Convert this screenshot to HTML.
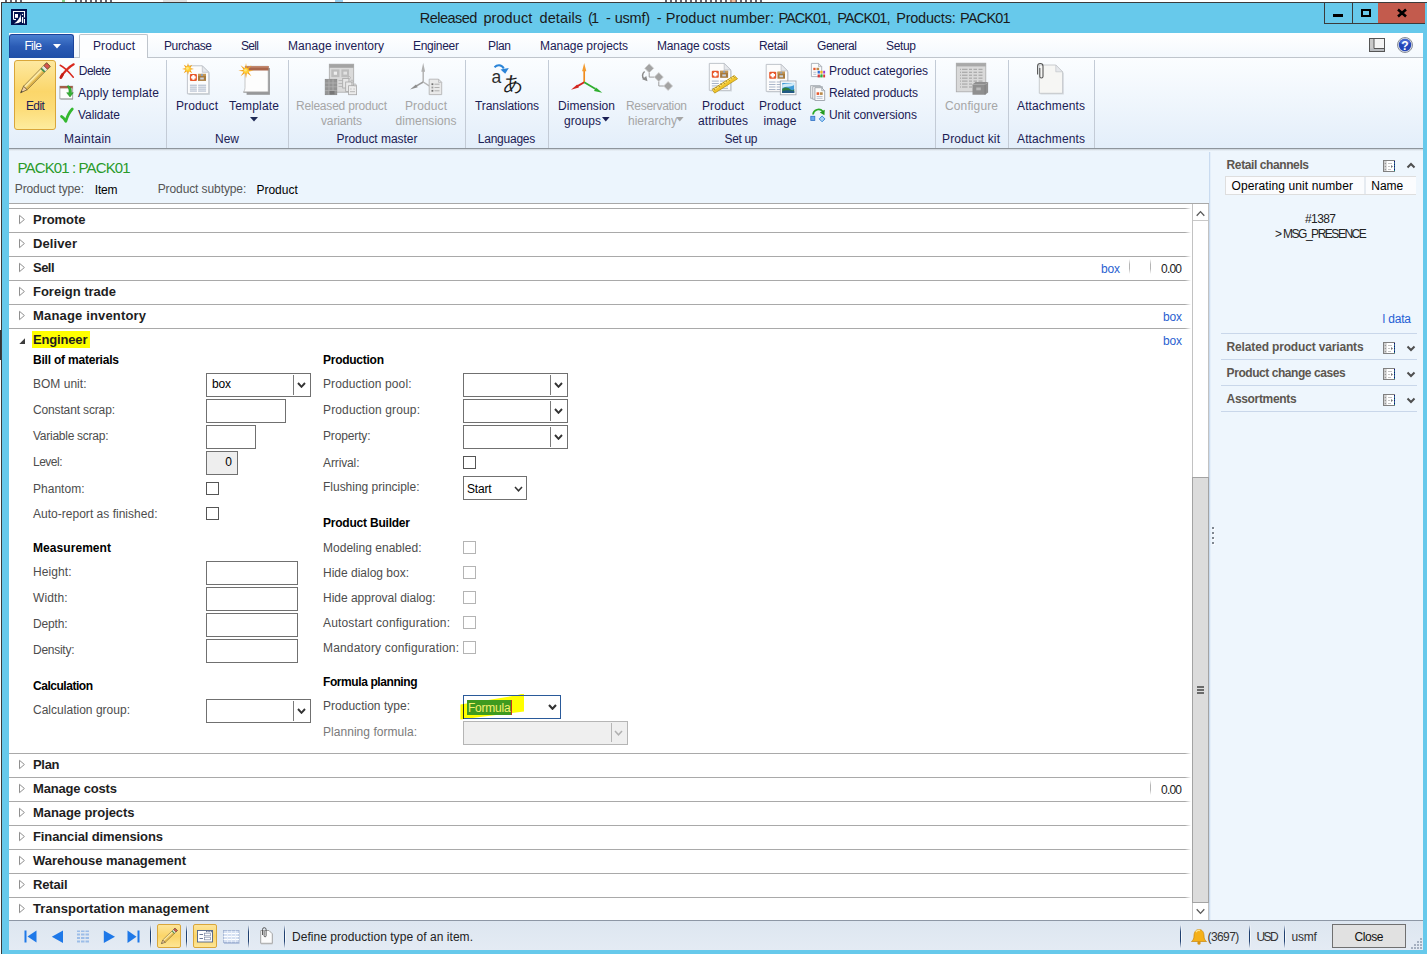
<!DOCTYPE html><html><head><meta charset="utf-8"><title>Released product details</title><style>
html,body{margin:0;padding:0}body{width:1427px;height:954px;position:relative;overflow:hidden;background:#fff;font-family:"Liberation Sans", sans-serif;font-size:12px}
.a{position:absolute;box-sizing:border-box}.t{position:absolute;white-space:pre}
</style></head><body>
<div class="a" style="left:0px;top:0px;width:1427px;height:954px;background:#ffffff;"></div>
<div class="a" style="left:5px;top:0px;width:17px;height:2px;background:repeating-linear-gradient(90deg,#223 0,#223 2px,transparent 2px,transparent 5px);opacity:.7;"></div>
<div class="a" style="left:75px;top:0px;width:37px;height:2px;background:repeating-linear-gradient(90deg,#223 0,#223 2px,transparent 2px,transparent 5px);opacity:.7;"></div>
<div class="a" style="left:665px;top:0px;width:97px;height:2px;background:repeating-linear-gradient(90deg,#223 0,#223 2px,transparent 2px,transparent 5px);opacity:.7;"></div>
<div class="a" style="left:62px;top:0px;width:3px;height:2px;background:#3a3;opacity:.6;"></div>
<div class="a" style="left:163px;top:0px;width:24px;height:2px;background:#ccc;opacity:.6;"></div>
<div class="a" style="left:335px;top:0px;width:8px;height:2px;background:#5ad;opacity:.6;"></div>
<div class="a" style="left:730px;top:0px;width:6px;height:2px;background:#e96;opacity:.6;"></div>
<div class="a" style="left:0px;top:330px;width:1px;height:30px;background:#333;"></div>
<div class="a" style="left:1px;top:2px;width:1426px;height:952px;background:#67c9eb;border-top:1px solid #3b3b3b;border-left:1px solid #3b3b3b;"></div>
<svg class="a" style="left:11px;top:9px" width="16" height="16" viewBox="0 0 16 16"><rect x="0" y="0" width="16" height="16" fill="#00114d"/><path d="M2.500 10.500V2.500H13.500V8.500" stroke="#fff" stroke-width="1.100" fill="none"/><path d="M2.500 10.500H5" stroke="#fff" stroke-width="1.100"/><rect x="4" y="5" width="3" height="3.800" fill="#fff"/><path d="M9.600 5C9 9 6.500 12.500 3.200 14.600C6 14.700 8.500 13.800 10.300 12.600Z" fill="#fff"/><circle cx="11.500" cy="5.500" r=".7" fill="#fff"/><rect x="11" y="8" width="1.200" height="6" fill="#fff"/><rect x="13" y="10" width="1" height="4.500" fill="#fff"/></svg>
<div class="a" style="left:1324px;top:2px;width:101px;height:22px;border:1px solid #3b3b3b;border-top:none;border-right:none;"></div>
<div class="a" style="left:1378px;top:3px;width:47px;height:20px;background:#c35b4d;"></div>
<div class="a" style="left:1352px;top:3px;width:1px;height:20px;background:#3b3b3b;"></div>
<div class="a" style="left:1333px;top:14px;width:10px;height:3px;background:#000;"></div>
<div class="a" style="left:1361px;top:9px;width:10px;height:8px;border:2px solid #000;"></div>
<svg class="a" style="left:1397px;top:8px" width="10" height="10" viewBox="0 0 10 10"><path d="M1 1.5L9 8.5M9 1.5L1 8.5" stroke="#000" stroke-width="2.6" fill="none"/></svg>
<div class="a" style="left:9px;top:33px;width:1414px;height:917px;background:#eef6fd;"></div>
<div class="a" style="left:9px;top:33px;width:1414px;height:25px;background:linear-gradient(#ffffff,#f3f8fd);"></div>
<div class="a" style="left:9px;top:57px;width:1414px;height:1px;background:#bfc5cc;"></div>
<div class="a" style="left:9px;top:34px;width:65px;height:24px;background:linear-gradient(#4a7fd0,#2a5bb5 50%,#1f4fa8);border:1px solid #1c449a;border-radius:3px 3px 0 0;border-bottom:none;"></div>
<svg class="a" style="left:53px;top:44px" width="8" height="5" viewBox="0 0 8 5"><path d="M0 0h8L4 4.5z" fill="#fff"/></svg>
<div class="a" style="left:79px;top:34px;width:69px;height:24px;background:#fdfeff;border:1px solid #bfc5cc;border-bottom:none;border-radius:2px 2px 0 0;"></div>
<svg class="a" style="left:1369px;top:38px" width="16" height="14" viewBox="0 0 16 14"><rect x="0.5" y="0.5" width="15" height="13" fill="#f4f4f4" stroke="#555"/><rect x="1" y="1" width="4" height="12" fill="#c9c9c9"/><rect x="1" y="10.5" width="14" height="2.5" fill="#b9bcc0"/><path d="M5 1v9.5H15" stroke="#555" fill="none"/></svg>
<svg class="a" style="left:1397px;top:37px" width="16" height="16" viewBox="0 0 16 16"><circle cx="8" cy="8" r="7.5" fill="#d8dde6" stroke="#8a8f99"/><circle cx="8" cy="8" r="6.2" fill="#2345b8"/><ellipse cx="8" cy="5" rx="5" ry="3" fill="#5a7de0" opacity=".6"/></svg>
<div class="a" style="left:9px;top:58px;width:1414px;height:90px;background:linear-gradient(#fbfdff,#eef5fc 55%,#e3eefa);"></div>
<div class="a" style="left:9px;top:148px;width:1414px;height:1px;background:#8e959c;"></div>
<div class="a" style="left:9px;top:149px;width:1414px;height:2px;background:linear-gradient(#c9d0d8,#eef6fd);"></div>
<div class="a" style="left:166px;top:60px;width:1px;height:88px;background:#c3cbd6;"></div>
<div class="a" style="left:288px;top:60px;width:1px;height:88px;background:#c3cbd6;"></div>
<div class="a" style="left:465px;top:60px;width:1px;height:88px;background:#c3cbd6;"></div>
<div class="a" style="left:548px;top:60px;width:1px;height:88px;background:#c3cbd6;"></div>
<div class="a" style="left:935px;top:60px;width:1px;height:88px;background:#c3cbd6;"></div>
<div class="a" style="left:1008px;top:60px;width:1px;height:88px;background:#c3cbd6;"></div>
<div class="a" style="left:1094px;top:60px;width:1px;height:88px;background:#c3cbd6;"></div>
<div class="a" style="left:14px;top:60px;width:42px;height:70px;background:linear-gradient(#fde8a0,#fbd66a 45%,#fcdc78 70%,#fdec9e);border:1px solid #d9a63a;border-radius:3px;"></div>
<svg class="a" style="left:250px;top:117px" width="8" height="5" viewBox="0 0 8 5"><path d="M0 0h8L4 4.5z" fill="#1e2a55"/></svg>
<svg class="a" style="left:601.5px;top:117.2px" width="8" height="5" viewBox="0 0 8 5"><path d="M0 0h7.600L3.800 4.400z" fill="#1b2054"/></svg>
<svg class="a" style="left:676.4px;top:117.2px" width="8" height="5" viewBox="0 0 8 5"><path d="M0 0h7.600L3.800 4.400z" fill="#a6a6a6"/></svg>
<svg class="a" style="left:0;top:58px" width="1427" height="92" viewBox="0 58 1427 92"><polygon points="27.11,89.76 50.18,66.36 46.62,62.84 23.55,86.25" fill="#f2cf6a" stroke="#6a5530" stroke-width="0.8" stroke-linejoin="round"/><polygon points="25.06,87.74 42.02,70.54 40.77,69.31 23.81,86.51" fill="#fbe9a6"/><polygon points="25.95,88.62 42.91,71.42 43.89,72.38 26.93,89.59" fill="#d9ad45"/><polygon points="44.06,72.56 45.45,71.15 41.89,67.64 40.50,69.05" fill="#3f8f4f"/><polygon points="45.45,71.15 47.40,69.18 43.84,65.66 41.89,67.64" fill="#e4e4e4"/><polygon points="47.40,69.18 50.18,66.36 46.62,62.84 43.84,65.66" fill="#d9534f" stroke="#6a5530" stroke-width="0.8" stroke-linejoin="round"/><polygon points="20.60,92.80 27.11,89.76 23.55,86.25" fill="#f1cfa4" stroke="#6a5530" stroke-width="0.8" stroke-linejoin="round"/><polygon points="20.60,92.80 22.75,91.80 21.57,90.64" fill="#3a3a3a"/><path d="M60.200 65.200C64 67 69 72 73.300 77.200" stroke="#d9281e" stroke-width="1.500" fill="none" stroke-linecap="round"/><path d="M73.700 64.300C69.500 66.500 63.500 72.500 61 77" stroke="#d9281e" stroke-width="2.200" fill="none" stroke-linecap="round"/><path d="M62.500 74.500L60.800 77.600" stroke="#c21f17" stroke-width="2.800" stroke-linecap="round"/><rect x="60.500" y="87.500" width="12.500" height="12.500" fill="#8d8d8d" opacity=".5"/><rect x="59.900" y="86.200" width="12.800" height="12.600" fill="#fdfdfd" stroke="#9a9a9a" stroke-width=".8"/><rect x="59.900" y="86" width="12.800" height="2.400" fill="#a5604a"/><path d="M68.200 85.500c3 1.500 3.600 4.500 3.200 7.200l1.900 0l-3.300 4.300l-3.300-4.300l2.200 0c.3-2.500-.1-4.700-1.700-6.500z" fill="#35b035" stroke="#1f8a1f" stroke-width=".5"/><path d="M61.500 116.500C63.300 117.500 64.800 119.200 65.800 121.300C67.200 116.500 69.500 112 72.300 109" stroke="#34b830" stroke-width="2.700" fill="none" stroke-linecap="round" stroke-linejoin="round"/><path d="M188.6 67.0h14.899999999999999l6.5 6.5v21.5h-21.4z" fill="#8a8f98" opacity=".28"/><path d="M187.4 65.8h14.899999999999999l6.5 6.5v21.5h-21.4z" fill="#fcfcfc" stroke="#b9bdc4" stroke-width=".9"/><path d="M202.3 65.8v6.5h6.5z" fill="#e6e8ec" stroke="#b9bdc4" stroke-width=".7"/><rect x="189.9" y="73.89999999999999" width="7" height="7" rx="1" fill="#e8582c"/><path d="M192.3 75.1h2.2v1.2000000000000002h1.2000000000000002v2.2h-1.2000000000000002v1.2000000000000002h-2.2v-1.2000000000000002h-1.2000000000000002v-2.2h1.2000000000000002z" fill="#fff"/><rect x="198.0" y="73.89999999999999" width="8" height="7" fill="#a87a3c"/><rect x="198.0" y="73.89999999999999" width="8" height="2" fill="#c79a55"/><rect x="200.2" y="77.49999999999999" width="3.6" height="2" fill="#c9d3e0"/><rect x="201.0" y="73.89999999999999" width="2" height="2" fill="#8fa0b8"/><rect x="189.9" y="84.70" width="7" height="1" fill="#a9b5c9"/><rect x="198.1" y="84.70" width="8" height="1" fill="#a9b5c9"/><rect x="189.9" y="86.65" width="7" height="1" fill="#a9b5c9"/><rect x="198.1" y="86.65" width="8" height="1" fill="#a9b5c9"/><rect x="189.9" y="88.60" width="7" height="1" fill="#a9b5c9"/><rect x="198.1" y="88.60" width="8" height="1" fill="#a9b5c9"/><rect x="189.9" y="90.55" width="7" height="1" fill="#a9b5c9"/><rect x="198.1" y="90.55" width="8" height="1" fill="#a9b5c9"/><polygon points="188.00,62.90 188.96,66.59 192.24,64.66 190.31,67.94 194.00,68.90 190.31,69.86 192.24,73.14 188.96,71.21 188.00,74.90 187.04,71.21 183.76,73.14 185.69,69.86 182.00,68.90 185.69,67.94 183.76,64.66 187.04,66.59" fill="#f5a21a"/><circle cx="188" cy="68.9" r="2.7" fill="#ffcf33"/><circle cx="187.5" cy="68.4" r="1.35" fill="#ffe680"/><rect x="246.600" y="68" width="23.300" height="26.800" fill="#777" opacity=".75"/><path d="M245 66.300h23.200v25.800h-24.500l0.600-1.500c.5-1 .7-2 .7-3z" fill="#fdfdfd" stroke="#a5a5a5" stroke-width=".6"/><rect x="245" y="66.100" width="23.600" height="4.400" fill="#a9664c"/><rect x="245" y="66.100" width="23.600" height="1.500" fill="#c28a70"/><path d="M243.300 92.200h25" stroke="#9a9a9a" stroke-width=".9"/><polygon points="246.00,63.00 246.92,68.48 251.44,65.26 248.22,69.78 253.70,70.70 248.22,71.62 251.44,76.14 246.92,72.92 246.00,78.40 245.08,72.92 240.56,76.14 243.78,71.62 238.30,70.70 243.78,69.78 240.56,65.26 245.08,68.48" fill="#f5a21a"/><circle cx="246" cy="70.7" r="2.6" fill="#ffcf33"/><circle cx="245.5" cy="70.2" r="1.30" fill="#ffe680"/><rect x="329.300" y="64.200" width="24.400" height="28" fill="#dadada" stroke="#a9a9a9" stroke-width=".8"/><rect x="329.300" y="64.200" width="24.400" height="3.600" fill="#a3a3a3"/><rect x="331.300" y="69.400" width="8.200" height="7.700" fill="#bdbdbd"/><rect x="333.800" y="71.600" width="3.200" height="3.200" fill="#ededed"/><rect x="341.400" y="69.400" width="7.600" height="7.700" fill="#bdbdbd"/><rect x="343.400" y="71.600" width="3.600" height="3" fill="#e2e2e2"/><path d="M338.500 80.500h4M338.500 83.500h4M338.500 86.500h4" stroke="#b5b5b5" stroke-width=".9"/><rect x="325.200" y="79.300" width="11.600" height="15.400" fill="#949494" stroke="#858585" stroke-width=".7"/><path d="M325.200 83h11.600M325.200 86.800h11.600M325.200 90.600h11.600M329 79.300v15.400M333 79.300v15.400" stroke="#b3b3b3" stroke-width=".8"/><rect x="329.500" y="91" width="5" height="3.500" fill="#777"/><rect x="342.700" y="78.500" width="6.200" height="9.500" fill="#e6e6e6" stroke="#a6a6a6" stroke-width=".8"/><rect x="345.700" y="82" width="6.200" height="9.500" fill="#e9e9e9" stroke="#a6a6a6" stroke-width=".8"/><rect x="348.600" y="85.700" width="8" height="9" fill="#ececec" stroke="#a6a6a6" stroke-width=".8"/><circle cx="349.300" cy="77.700" r="1.100" fill="#e9e9e9" stroke="#a0a0a0" stroke-width=".6"/><circle cx="352" cy="81.200" r="1.100" fill="#e9e9e9" stroke="#a0a0a0" stroke-width=".6"/><circle cx="355" cy="84.900" r="1.100" fill="#e9e9e9" stroke="#a0a0a0" stroke-width=".6"/><path d="M350.300 89h1.200M353.500 89h1.200M350 91.700h5" stroke="#b0b0b0" stroke-width=".9"/><path d="M423.200 70v12" stroke="#b4b4b4" stroke-width="1.500"/><path d="M423.200 62.800l1.900 8.900h-3.800z" fill="#b0b0b0"/><path d="M423.200 82l-8 4.700" stroke="#9b9b9b" stroke-width="1.500"/><path d="M410 89.600l6-5.200l1.700 2.900z" fill="#8e8e8e"/><path d="M423.200 82l6 3.800" stroke="#b5b5b5" stroke-width="1.400"/><path d="M429.2 79.2h9.3l3.2 3.2v12.2h-12.5z" fill="#e9e9e9" stroke="#b5b5b5" stroke-width=".9"/><path d="M438.5 79.2v3.2h3.2z" fill="#e6e8ec" stroke="#b5b5b5" stroke-width=".7"/><rect x="431.500" y="83.300" width="1.800" height="1.800" fill="#6f6f6f"/><rect x="431.500" y="86.600" width="1.800" height="1.800" fill="#9a9a9a"/><rect x="431.500" y="89.900" width="1.800" height="1.800" fill="#6f6f6f"/><path d="M434.500 84.200h5M434.500 87.500h5M434.500 90.800h5" stroke="#a8a8a8" stroke-width=".9"/><path d="M494.500 67.200c2.600-2.600 6.800-2.900 9.300 1.200" stroke="#2a84d8" stroke-width="2" fill="none"/><path d="M500.500 69.600l8.300-1.600l-3.600 5.700z" fill="#2a84d8"/><path d="M584.200 70v12.300" stroke="#f08a1c" stroke-width="1.700"/><path d="M584.200 63l2.100 8.300h-4.200z" fill="#f39a2e"/><path d="M584.200 82.300l-7.500 4.300" stroke="#d3261f" stroke-width="1.800"/><path d="M571 89.700l6.200-5.300l1.700 3.100z" fill="#d3261f"/><path d="M584.200 82.300l11 6.400" stroke="#2fae2f" stroke-width="1.800"/><path d="M602.300 92.700l-8.300-1.800l1.900-3.400z" fill="#2fae2f"/><path d="M649.200 72.500v4.600h5M658.800 81.500v4.500h5" stroke="#9d9d9d" fill="none" stroke-width="1"/><path d="M649.2 63.8l4.5 4.5l-4.5 4.5l-4.5 -4.5z" fill="#a3a3a3" stroke="#d0d0d0" stroke-width=".8"/><path d="M658.8 72.6l4.5 4.5l-4.5 4.5l-4.5 -4.5z" fill="#a3a3a3" stroke="#d0d0d0" stroke-width=".8"/><path d="M668.1 81.5l4.5 4.5l-4.5 4.5l-4.5 -4.5z" fill="#a3a3a3" stroke="#d0d0d0" stroke-width=".8"/><path d="M644.600 71.500c-2.600 2-2.700 5.300-.6 7.500" stroke="#8b8b8b" stroke-width="1.500" fill="none"/><path d="M642.200 79.300l5.300 2l-1.200-5.200z" fill="#8b8b8b"/><path d="M710.5 64.6h14.899999999999999l6.5 6.5v20.5h-21.4z" fill="#8a8f98" opacity=".28"/><path d="M709.3 63.4h14.899999999999999l6.5 6.5v20.5h-21.4z" fill="#fcfcfc" stroke="#b9bdc4" stroke-width=".9"/><path d="M724.1999999999999 63.4v6.5h6.5z" fill="#e6e8ec" stroke="#b9bdc4" stroke-width=".7"/><rect x="711.8" y="70.8" width="7" height="7" rx="1" fill="#e8582c"/><path d="M714.1999999999999 72.0h2.2v1.2000000000000002h1.2000000000000002v2.2h-1.2000000000000002v1.2000000000000002h-2.2v-1.2000000000000002h-1.2000000000000002v-2.2h1.2000000000000002z" fill="#fff"/><rect x="720.1" y="70.8" width="8" height="7" fill="#a87a3c"/><rect x="720.1" y="70.8" width="8" height="2" fill="#c79a55"/><rect x="722.3000000000001" y="74.39999999999999" width="3.6" height="2" fill="#c9d3e0"/><rect x="723.1" y="70.8" width="2" height="2" fill="#8fa0b8"/><rect x="711.8" y="80.60" width="7" height="1" fill="#a9b5c9"/><rect x="720.0" y="80.60" width="8" height="1" fill="#a9b5c9"/><rect x="711.8" y="83.00" width="7" height="1" fill="#a9b5c9"/><rect x="720.0" y="83.00" width="8" height="1" fill="#a9b5c9"/><rect x="711.8" y="85.40" width="7" height="1" fill="#a9b5c9"/><rect x="720.0" y="85.40" width="8" height="1" fill="#a9b5c9"/><rect x="711.8" y="87.80" width="7" height="1" fill="#a9b5c9"/><rect x="720.0" y="87.80" width="8" height="1" fill="#a9b5c9"/><polygon points="712.300,89.600 734.300,75.500 737.500,78.800 714.700,93.100" fill="#f1c52c" stroke="#b8900f" stroke-width=".8"/><polygon points="712.600,89.900 734.300,76 735,76.800 713.200,90.700" fill="#fbe37c"/><path d="M713.62 88.75l1.29 1.39" stroke="#7d5e07" stroke-width=".7"/><path d="M716.06 87.19l0.82 0.88" stroke="#7d5e07" stroke-width=".7"/><path d="M718.51 85.62l1.29 1.39" stroke="#7d5e07" stroke-width=".7"/><path d="M720.95 84.05l0.82 0.88" stroke="#7d5e07" stroke-width=".7"/><path d="M723.40 82.49l1.29 1.39" stroke="#7d5e07" stroke-width=".7"/><path d="M725.84 80.92l0.82 0.88" stroke="#7d5e07" stroke-width=".7"/><path d="M728.29 79.35l1.29 1.39" stroke="#7d5e07" stroke-width=".7"/><path d="M730.73 77.79l0.82 0.88" stroke="#7d5e07" stroke-width=".7"/><path d="M733.18 76.22l1.29 1.39" stroke="#7d5e07" stroke-width=".7"/><path d="M767.4000000000001 65.60000000000001h14.899999999999999l6.5 6.5v20.5h-21.4z" fill="#8a8f98" opacity=".28"/><path d="M766.2 64.4h14.899999999999999l6.5 6.5v20.5h-21.4z" fill="#fcfcfc" stroke="#b9bdc4" stroke-width=".9"/><path d="M781.1 64.4v6.5h6.5z" fill="#e6e8ec" stroke="#b9bdc4" stroke-width=".7"/><rect x="769.2" y="71.7" width="7" height="7" rx="1" fill="#e8582c"/><path d="M771.6 72.9h2.2v1.2000000000000002h1.2000000000000002v2.2h-1.2000000000000002v1.2000000000000002h-2.2v-1.2000000000000002h-1.2000000000000002v-2.2h1.2000000000000002z" fill="#fff"/><rect x="777.5" y="71.7" width="7.5" height="7" fill="#a87a3c"/><rect x="777.5" y="71.7" width="7.5" height="2" fill="#c79a55"/><rect x="779.45" y="75.3" width="3.6" height="2" fill="#c9d3e0"/><rect x="780.25" y="71.7" width="2" height="2" fill="#8fa0b8"/><rect x="769" y="81.50" width="6.5" height="1" fill="#a9b5c9"/><rect x="776.7" y="81.50" width="5" height="1" fill="#a9b5c9"/><rect x="769" y="84.00" width="6.5" height="1" fill="#a9b5c9"/><rect x="776.7" y="84.00" width="5" height="1" fill="#a9b5c9"/><rect x="769" y="86.50" width="6.5" height="1" fill="#a9b5c9"/><rect x="776.7" y="86.50" width="5" height="1" fill="#a9b5c9"/><rect x="769" y="89.00" width="6.5" height="1" fill="#a9b5c9"/><rect x="776.7" y="89.00" width="5" height="1" fill="#a9b5c9"/><rect x="780.300" y="81" width="15.700" height="13.800" fill="#fdfdfd" stroke="#9aa1ab" stroke-width=".8"/><rect x="782.200" y="82.900" width="12" height="10" fill="#3f9ad6"/><path d="M782.200 84.500c4-1.500 8-.5 12-2v2.500c-4 2.500-8 1-12 3z" fill="#cfeaf8"/><path d="M782.200 92.900v-4c3-2.500 6-1.500 8 .3s3 1.200 4-.2v3.900z" fill="#2f7d3a"/><path d="M782.200 92.900v-2c3-1 8-1 12 0v2z" fill="#215a86"/><path d="M811.4 63.4h7.1000000000000005l3.2 3.2v10.0h-10.3z" fill="#fcfcfc" stroke="#a9aeb6" stroke-width=".9"/><path d="M818.4999999999999 63.4v3.2h3.2z" fill="#e6e8ec" stroke="#a9aeb6" stroke-width=".7"/><rect x="813.300" y="67.800" width="2.300" height="2.300" fill="#e8582c"/><rect x="816.500" y="67.800" width="2.600" height="2.300" fill="#b98a4a"/><path d="M813.300 72.300h3M813.300 74.300h3" stroke="#aab4c6" stroke-width=".8"/><rect x="817.600" y="70.800" width="2.300" height="2.700" fill="#2f6fd6"/><rect x="820.300" y="70.800" width="2.300" height="2.700" fill="#f5b21a"/><rect x="823.200" y="70.800" width="1.900" height="2.700" fill="#a03ad0"/><rect x="817.600" y="74.500" width="2.300" height="2.900" fill="#d63a3a"/><rect x="820.300" y="74.500" width="2.300" height="2.900" fill="#35b035"/><rect x="823.200" y="74.500" width="1.900" height="2.900" fill="#d63a3a"/><rect x="810.700" y="85.700" width="9.500" height="12.500" fill="#f1f1f1" stroke="#9aa0a8" stroke-width=".8"/><rect x="812.800" y="86.700" width="9.500" height="12.500" fill="#f5f5f5" stroke="#9aa0a8" stroke-width=".8"/><path d="M814.9 87.7h6.800000000000001l3 3v9.8h-9.8z" fill="#fcfcfc" stroke="#9aa0a8" stroke-width=".9"/><path d="M821.6999999999999 87.7v3h3z" fill="#e6e8ec" stroke="#9aa0a8" stroke-width=".7"/><rect x="816.600" y="92.300" width="2.600" height="2.600" fill="#e8582c"/><rect x="820" y="92.300" width="2.700" height="2.600" fill="#b98a4a"/><path d="M816.600 96.500h6M816.600 98.300h6" stroke="#aab4c6" stroke-width=".8"/><path d="M813 114.500c.5-4.800 6.500-6.800 10-3" stroke="#2caa27" stroke-width="1.700" fill="none"/><path d="M824.800 109.700l-.4 5.500l-4.600-2.800z" fill="#239a1f"/><rect x="810.800" y="116.300" width="4" height="4.200" fill="#6aa8ee" stroke="#2f6fc4" stroke-width=".8"/><path d="M822.100 116l2.900 2.900l-2.900 2.900l-2.900-2.900z" fill="#a5d2f7" stroke="#2f7fd0" stroke-width=".9"/><rect x="956.300" y="63.200" width="29.500" height="28.600" fill="#d9d9d9" stroke="#a9a9a9" stroke-width=".8"/><rect x="956.300" y="63.200" width="29.500" height="3.200" fill="#a9a9a9"/><path d="M960 69.30h1M962 69.30h5.500M969 69.30h3M973.500 69.30h3.500M978.500 69.30h4" stroke="#9f9f9f" stroke-width="1"/><path d="M960 72.25h1M962 72.25h5.500M969 72.25h3M973.500 72.25h3.500M978.500 72.25h4" stroke="#9f9f9f" stroke-width="1"/><path d="M960 75.20h1M962 75.20h5.500M969 75.20h3M973.500 75.20h3.500M978.500 75.20h4" stroke="#9f9f9f" stroke-width="1"/><path d="M960 78.15h1M962 78.15h5.500M969 78.15h3M973.500 78.15h3.500M978.500 78.15h4" stroke="#9f9f9f" stroke-width="1"/><path d="M960 81.10h1M962 81.10h5.500M969 81.10h3M973.500 81.10h3.500M978.500 81.10h4" stroke="#9f9f9f" stroke-width="1"/><path d="M960 84.05h1M962 84.05h5.500M969 84.05h3M973.500 84.05h3.500M978.500 84.05h4" stroke="#9f9f9f" stroke-width="1"/><path d="M960 87.00h1M962 87.00h5.500M969 87.00h3M973.500 87.00h3.500M978.500 87.00h4" stroke="#9f9f9f" stroke-width="1"/><path d="M972.500 84.500l3-2.400h12.600v10.300l-3 2.400h-12.600z" fill="#8f8f8f"/><path d="M972.500 84.500h12.600l3-2.400" stroke="#b5b5b5" fill="none" stroke-width=".7"/><path d="M985.100 84.500v10.300" stroke="#7c7c7c" stroke-width=".7"/><rect x="976.300" y="87.500" width="4.500" height="2.800" fill="#b9b9b9"/><path d="M1040.5 66.2h16.5l6.8 6.8v21.5h-23.3z" fill="#8a8f98" opacity=".28"/><path d="M1039.3 65h16.5l6.8 6.8v21.5h-23.3z" fill="#f6f6f4" stroke="#c3c6ca" stroke-width=".9"/><path d="M1055.8 65v6.8h6.8z" fill="#e6e8ec" stroke="#c3c6ca" stroke-width=".7"/><path d="M1037.600 74.500v-8.300a2.700 2.700 0 0 1 5.400 0v10.200a1.600 1.600 0 0 1 -3.200 0v-8.400" stroke="#555" stroke-width="1.100" fill="none"/></svg>
<div class="a" style="left:9px;top:151px;width:1200px;height:52px;background:#ecf5fd;"></div>
<div class="a" style="left:9px;top:203px;width:1200px;height:1px;background:#a8a8a8;"></div>
<div class="a" style="left:9px;top:204px;width:1183px;height:718px;background:#ffffff;"></div>
<div class="a" style="left:9px;top:920px;width:1414px;height:1px;background:#8d97a5;"></div>
<div class="a" style="left:9px;top:921px;width:1414px;height:1px;background:#c3cbd6;"></div>
<div class="a" style="left:9px;top:208px;width:1176px;height:1px;background:#a9a9a9;"></div>
<div class="a" style="left:1185px;top:208px;width:6px;height:1px;background:linear-gradient(90deg,#a9a9a9,#ffffff);"></div>
<div class="a" style="left:9px;top:232px;width:1176px;height:1px;background:#a9a9a9;"></div>
<div class="a" style="left:1185px;top:232px;width:6px;height:1px;background:linear-gradient(90deg,#a9a9a9,#ffffff);"></div>
<div class="a" style="left:9px;top:256px;width:1176px;height:1px;background:#a9a9a9;"></div>
<div class="a" style="left:1185px;top:256px;width:6px;height:1px;background:linear-gradient(90deg,#a9a9a9,#ffffff);"></div>
<div class="a" style="left:9px;top:280px;width:1176px;height:1px;background:#a9a9a9;"></div>
<div class="a" style="left:1185px;top:280px;width:6px;height:1px;background:linear-gradient(90deg,#a9a9a9,#ffffff);"></div>
<div class="a" style="left:9px;top:304px;width:1176px;height:1px;background:#a9a9a9;"></div>
<div class="a" style="left:1185px;top:304px;width:6px;height:1px;background:linear-gradient(90deg,#a9a9a9,#ffffff);"></div>
<div class="a" style="left:9px;top:328px;width:1176px;height:1px;background:#a9a9a9;"></div>
<div class="a" style="left:1185px;top:328px;width:6px;height:1px;background:linear-gradient(90deg,#a9a9a9,#ffffff);"></div>
<div class="a" style="left:9px;top:753px;width:1176px;height:1px;background:#a9a9a9;"></div>
<div class="a" style="left:1185px;top:753px;width:6px;height:1px;background:linear-gradient(90deg,#a9a9a9,#ffffff);"></div>
<div class="a" style="left:9px;top:777px;width:1176px;height:1px;background:#a9a9a9;"></div>
<div class="a" style="left:1185px;top:777px;width:6px;height:1px;background:linear-gradient(90deg,#a9a9a9,#ffffff);"></div>
<div class="a" style="left:9px;top:801px;width:1176px;height:1px;background:#a9a9a9;"></div>
<div class="a" style="left:1185px;top:801px;width:6px;height:1px;background:linear-gradient(90deg,#a9a9a9,#ffffff);"></div>
<div class="a" style="left:9px;top:825px;width:1176px;height:1px;background:#a9a9a9;"></div>
<div class="a" style="left:1185px;top:825px;width:6px;height:1px;background:linear-gradient(90deg,#a9a9a9,#ffffff);"></div>
<div class="a" style="left:9px;top:849px;width:1176px;height:1px;background:#a9a9a9;"></div>
<div class="a" style="left:1185px;top:849px;width:6px;height:1px;background:linear-gradient(90deg,#a9a9a9,#ffffff);"></div>
<div class="a" style="left:9px;top:873px;width:1176px;height:1px;background:#a9a9a9;"></div>
<div class="a" style="left:1185px;top:873px;width:6px;height:1px;background:linear-gradient(90deg,#a9a9a9,#ffffff);"></div>
<div class="a" style="left:9px;top:897px;width:1176px;height:1px;background:#a9a9a9;"></div>
<div class="a" style="left:1185px;top:897px;width:6px;height:1px;background:linear-gradient(90deg,#a9a9a9,#ffffff);"></div>
<svg class="a" style="left:18.5px;top:214px" width="7" height="11" viewBox="0 0 7 11"><path d="M0.500 1.300L5.400 5.500L0.500 9.700z" fill="#fff" stroke="#8f8f8f" stroke-width="1"/></svg>
<svg class="a" style="left:18.5px;top:238px" width="7" height="11" viewBox="0 0 7 11"><path d="M0.500 1.300L5.400 5.500L0.500 9.700z" fill="#fff" stroke="#8f8f8f" stroke-width="1"/></svg>
<svg class="a" style="left:18.5px;top:262px" width="7" height="11" viewBox="0 0 7 11"><path d="M0.500 1.300L5.400 5.500L0.500 9.700z" fill="#fff" stroke="#8f8f8f" stroke-width="1"/></svg>
<svg class="a" style="left:18.5px;top:286px" width="7" height="11" viewBox="0 0 7 11"><path d="M0.500 1.300L5.400 5.500L0.500 9.700z" fill="#fff" stroke="#8f8f8f" stroke-width="1"/></svg>
<svg class="a" style="left:18.5px;top:310px" width="7" height="11" viewBox="0 0 7 11"><path d="M0.500 1.300L5.400 5.500L0.500 9.700z" fill="#fff" stroke="#8f8f8f" stroke-width="1"/></svg>
<svg class="a" style="left:18.5px;top:759px" width="7" height="11" viewBox="0 0 7 11"><path d="M0.500 1.300L5.400 5.500L0.500 9.700z" fill="#fff" stroke="#8f8f8f" stroke-width="1"/></svg>
<svg class="a" style="left:18.5px;top:783px" width="7" height="11" viewBox="0 0 7 11"><path d="M0.500 1.300L5.400 5.500L0.500 9.700z" fill="#fff" stroke="#8f8f8f" stroke-width="1"/></svg>
<svg class="a" style="left:18.5px;top:807px" width="7" height="11" viewBox="0 0 7 11"><path d="M0.500 1.300L5.400 5.500L0.500 9.700z" fill="#fff" stroke="#8f8f8f" stroke-width="1"/></svg>
<svg class="a" style="left:18.5px;top:831px" width="7" height="11" viewBox="0 0 7 11"><path d="M0.500 1.300L5.400 5.500L0.500 9.700z" fill="#fff" stroke="#8f8f8f" stroke-width="1"/></svg>
<svg class="a" style="left:18.5px;top:855px" width="7" height="11" viewBox="0 0 7 11"><path d="M0.500 1.300L5.400 5.500L0.500 9.700z" fill="#fff" stroke="#8f8f8f" stroke-width="1"/></svg>
<svg class="a" style="left:18.5px;top:879px" width="7" height="11" viewBox="0 0 7 11"><path d="M0.500 1.300L5.400 5.500L0.500 9.700z" fill="#fff" stroke="#8f8f8f" stroke-width="1"/></svg>
<svg class="a" style="left:18.5px;top:903px" width="7" height="11" viewBox="0 0 7 11"><path d="M0.500 1.300L5.400 5.500L0.500 9.700z" fill="#fff" stroke="#8f8f8f" stroke-width="1"/></svg>
<svg class="a" style="left:18.5px;top:337.5px" width="8" height="8" viewBox="0 0 8 8"><path d="M6 0.300V6H0.300z" fill="#3c3c3c"/></svg>
<div class="a" style="left:32px;top:331px;width:58px;height:17px;background:#ffff00;"></div>
<div class="a" style="left:1129px;top:259px;width:1px;height:15px;background:linear-gradient(#fff,#b4b4b4 35%,#b4b4b4 65%,#fff);"></div>
<div class="a" style="left:1150px;top:259px;width:1px;height:15px;background:linear-gradient(#fff,#b4b4b4 35%,#b4b4b4 65%,#fff);"></div>
<div class="a" style="left:1150px;top:780px;width:1px;height:15px;background:linear-gradient(#fff,#b4b4b4 35%,#b4b4b4 65%,#fff);"></div>
<div class="a" style="left:206px;top:373px;width:105px;height:24px;background:#fff;border:1px solid #707070;"></div>
<div class="a" style="left:293px;top:375px;width:1px;height:20px;background:#7a7a7a;"></div>
<svg class="a" style="left:297px;top:382px" width="9" height="6" viewBox="0 0 9 6"><path d="M1 1L4.500 4.800L8 1" stroke="#333" stroke-width="1.9" fill="none"/></svg>
<div class="a" style="left:206px;top:399px;width:80px;height:24px;background:#fff;border:1px solid #707070;"></div>
<div class="a" style="left:206px;top:425px;width:50px;height:24px;background:#fff;border:1px solid #707070;"></div>
<div class="a" style="left:206px;top:451px;width:32px;height:24px;background:#eeeeee;border:1px solid #707070;"></div>
<div class="a" style="left:206px;top:482px;width:13px;height:13px;background:#fff;border:1px solid #555;"></div>
<div class="a" style="left:206px;top:507px;width:13px;height:13px;background:#fff;border:1px solid #555;"></div>
<div class="a" style="left:206px;top:561px;width:92px;height:24px;background:#fff;border:1px solid #707070;"></div>
<div class="a" style="left:206px;top:587px;width:92px;height:24px;background:#fff;border:1px solid #707070;"></div>
<div class="a" style="left:206px;top:613px;width:92px;height:24px;background:#fff;border:1px solid #707070;"></div>
<div class="a" style="left:206px;top:639px;width:92px;height:24px;background:#fff;border:1px solid #707070;"></div>
<div class="a" style="left:206px;top:699px;width:105px;height:24px;background:#fff;border:1px solid #707070;"></div>
<div class="a" style="left:293px;top:701px;width:1px;height:20px;background:#7a7a7a;"></div>
<svg class="a" style="left:297px;top:708px" width="9" height="6" viewBox="0 0 9 6"><path d="M1 1L4.500 4.800L8 1" stroke="#333" stroke-width="1.9" fill="none"/></svg>
<div class="a" style="left:463px;top:373px;width:105px;height:24px;background:#fff;border:1px solid #707070;"></div>
<div class="a" style="left:550px;top:375px;width:1px;height:20px;background:#7a7a7a;"></div>
<svg class="a" style="left:554px;top:382px" width="9" height="6" viewBox="0 0 9 6"><path d="M1 1L4.500 4.800L8 1" stroke="#333" stroke-width="1.9" fill="none"/></svg>
<div class="a" style="left:463px;top:399px;width:105px;height:24px;background:#fff;border:1px solid #707070;"></div>
<div class="a" style="left:550px;top:401px;width:1px;height:20px;background:#7a7a7a;"></div>
<svg class="a" style="left:554px;top:408px" width="9" height="6" viewBox="0 0 9 6"><path d="M1 1L4.500 4.800L8 1" stroke="#333" stroke-width="1.9" fill="none"/></svg>
<div class="a" style="left:463px;top:425px;width:105px;height:24px;background:#fff;border:1px solid #707070;"></div>
<div class="a" style="left:550px;top:427px;width:1px;height:20px;background:#7a7a7a;"></div>
<svg class="a" style="left:554px;top:434px" width="9" height="6" viewBox="0 0 9 6"><path d="M1 1L4.500 4.800L8 1" stroke="#333" stroke-width="1.9" fill="none"/></svg>
<div class="a" style="left:463px;top:456px;width:13px;height:13px;background:#fff;border:1px solid #555;"></div>
<div class="a" style="left:463px;top:476px;width:64px;height:24px;background:#fff;border:1px solid #707070;"></div>
<svg class="a" style="left:514px;top:486px" width="9" height="6" viewBox="0 0 9 6"><path d="M1 1L4.500 4.800L8 1" stroke="#333" stroke-width="1.5" fill="none"/></svg>
<div class="a" style="left:463px;top:541px;width:13px;height:13px;background:#fff;border:1px solid #b4b4b4;"></div>
<div class="a" style="left:463px;top:566px;width:13px;height:13px;background:#fff;border:1px solid #b4b4b4;"></div>
<div class="a" style="left:463px;top:591px;width:13px;height:13px;background:#fff;border:1px solid #b4b4b4;"></div>
<div class="a" style="left:463px;top:616px;width:13px;height:13px;background:#fff;border:1px solid #b4b4b4;"></div>
<div class="a" style="left:463px;top:641px;width:13px;height:13px;background:#fff;border:1px solid #b4b4b4;"></div>
<div class="a" style="left:463px;top:695px;width:98px;height:24px;background:#ffffff;"></div>
<svg class="a" style="left:455px;top:690px" width="75" height="34" viewBox="455 690 75 34"><polygon points="460.400,704.500 516.600,695.300 521,694 524,694 524,711.500 460.400,719.500" fill="#ffff00"/></svg>
<div class="a" style="left:463px;top:695px;width:98px;height:24px;border:1px solid #2a5a9a;"></div>
<div class="a" style="left:463px;top:704px;width:1px;height:15px;background:#20301a;"></div>
<div class="a" style="left:464px;top:718px;width:60px;height:1px;background:#4a5a1a;opacity:.0;"></div>
<div class="a" style="left:467px;top:700px;width:44px;height:15px;background:#3f9a1f;"></div>
<div class="a" style="left:511px;top:700px;width:1px;height:15px;background:#c8341e;"></div>
<svg class="a" style="left:548px;top:704px" width="9" height="6" viewBox="0 0 9 6"><path d="M1 1L4.500 4.800L8 1" stroke="#333" stroke-width="2.1" fill="none"/></svg>
<div class="a" style="left:463px;top:721px;width:165px;height:24px;background:#efefef;border:1px solid #b5b5b5;"></div>
<div class="a" style="left:611px;top:723px;width:1px;height:19px;background:#b5b5b5;"></div>
<svg class="a" style="left:614px;top:730px" width="9" height="6" viewBox="0 0 9 6"><path d="M1 1L4.500 4.800L8 1" stroke="#b0b0b0" stroke-width="1.5" fill="none"/></svg>
<div class="a" style="left:1192px;top:204px;width:17px;height:716px;background:#ffffff;border-left:1px solid #c2c2c2;border-right:1px solid #c2c2c2;"></div>
<div class="a" style="left:1193px;top:220px;width:15px;height:1px;background:#c8c8c8;"></div>
<div class="a" style="left:1192px;top:477px;width:17px;height:426px;background:#dcdcdc;border:1px solid #a3a3a3;"></div>
<svg class="a" style="left:1196px;top:210px" width="9" height="7" viewBox="0 0 9 7"><path d="M0.700 5.800L4.500 1.600L8.300 5.800" stroke="#5a5a5a" stroke-width="1.300" fill="none"/></svg>
<svg class="a" style="left:1196px;top:908px" width="9" height="7" viewBox="0 0 9 7"><path d="M0.700 1.200L4.500 5.400L8.300 1.200" stroke="#5a5a5a" stroke-width="1.300" fill="none"/></svg>
<div class="a" style="left:1197px;top:686px;width:7px;height:2px;background:#6a6a6a;"></div>
<div class="a" style="left:1197px;top:689px;width:7px;height:2px;background:#6a6a6a;"></div>
<div class="a" style="left:1197px;top:692px;width:7px;height:2px;background:#6a6a6a;"></div>
<div class="a" style="left:1212px;top:527px;width:2px;height:2px;background:#7f8790;"></div>
<div class="a" style="left:1213px;top:528px;width:2px;height:2px;background:#ffffff;opacity:.8;z-index:0;"></div>
<div class="a" style="left:1212px;top:527px;width:2px;height:2px;background:#7f8790;"></div>
<div class="a" style="left:1212px;top:532px;width:2px;height:2px;background:#7f8790;"></div>
<div class="a" style="left:1213px;top:533px;width:2px;height:2px;background:#ffffff;opacity:.8;z-index:0;"></div>
<div class="a" style="left:1212px;top:532px;width:2px;height:2px;background:#7f8790;"></div>
<div class="a" style="left:1212px;top:537px;width:2px;height:2px;background:#7f8790;"></div>
<div class="a" style="left:1213px;top:538px;width:2px;height:2px;background:#ffffff;opacity:.8;z-index:0;"></div>
<div class="a" style="left:1212px;top:537px;width:2px;height:2px;background:#7f8790;"></div>
<div class="a" style="left:1212px;top:542px;width:2px;height:2px;background:#7f8790;"></div>
<div class="a" style="left:1213px;top:543px;width:2px;height:2px;background:#ffffff;opacity:.8;z-index:0;"></div>
<div class="a" style="left:1212px;top:542px;width:2px;height:2px;background:#7f8790;"></div>
<div class="a" style="left:1209px;top:152px;width:1px;height:768px;background:#c9dbf0;"></div>
<div class="a" style="left:1210px;top:152px;width:1px;height:768px;background:#e4effa;"></div>
<svg class="a" style="left:1383px;top:160px" width="12" height="12" viewBox="0 0 12 12"><rect x="0.500" y="0.500" width="11" height="11" fill="#fff" stroke="#808080"/><rect x="1" y="1" width="2.700" height="10" fill="#cfcfcf"/><path d="M1.800 3.500h1M1.800 6.500h1M1.800 9.500h1" stroke="#8a8a8a" stroke-width="1"/><path d="M5 3.500h4M5 6.500h2M5 9.500h3" stroke="#c4c4c4" stroke-width="1"/><path d="M8 5l2 1.500l-2 1.500z" fill="#777"/><path d="M11.500 1v10" stroke="#101080" stroke-width="1" stroke-dasharray="1.500 1"/><path d="M11.500 2.500v10" stroke="#108080" stroke-width="1" stroke-dasharray="1 1.500"/></svg>
<svg class="a" style="left:1406px;top:162px" width="10" height="7" viewBox="0 0 10 7"><path d="M1.500 5.500L5 2L8.500 5.500" stroke="#4f4f4f" stroke-width="2" fill="none"/></svg>
<div class="a" style="left:1225px;top:176px;width:191px;height:19px;background:#fbfcfe;border:1px solid #dedede;border-right:none;"></div>
<div class="a" style="left:1364px;top:177px;width:2px;height:17px;background:#e6ebf1;"></div>
<div class="a" style="left:1221px;top:333px;width:196px;height:1px;background:#c9d7ea;"></div>
<div class="a" style="left:1221px;top:359px;width:196px;height:1px;background:#c9d7ea;"></div>
<div class="a" style="left:1221px;top:385px;width:196px;height:1px;background:#c9d7ea;"></div>
<div class="a" style="left:1221px;top:411px;width:196px;height:1px;background:#c9d7ea;"></div>
<svg class="a" style="left:1383px;top:342px" width="12" height="12" viewBox="0 0 12 12"><rect x="0.500" y="0.500" width="11" height="11" fill="#fff" stroke="#808080"/><rect x="1" y="1" width="2.700" height="10" fill="#cfcfcf"/><path d="M1.800 3.500h1M1.800 6.500h1M1.800 9.500h1" stroke="#8a8a8a" stroke-width="1"/><path d="M5 3.500h4M5 6.500h2M5 9.500h3" stroke="#c4c4c4" stroke-width="1"/><path d="M8 5l2 1.500l-2 1.500z" fill="#777"/><path d="M11.500 1v10" stroke="#101080" stroke-width="1" stroke-dasharray="1.500 1"/><path d="M11.500 2.500v10" stroke="#108080" stroke-width="1" stroke-dasharray="1 1.500"/></svg>
<svg class="a" style="left:1406px;top:345px" width="10" height="7" viewBox="0 0 10 7"><path d="M1.500 1.500L5 5L8.500 1.500" stroke="#4f4f4f" stroke-width="2" fill="none"/></svg>
<svg class="a" style="left:1383px;top:368px" width="12" height="12" viewBox="0 0 12 12"><rect x="0.500" y="0.500" width="11" height="11" fill="#fff" stroke="#808080"/><rect x="1" y="1" width="2.700" height="10" fill="#cfcfcf"/><path d="M1.800 3.500h1M1.800 6.500h1M1.800 9.500h1" stroke="#8a8a8a" stroke-width="1"/><path d="M5 3.500h4M5 6.500h2M5 9.500h3" stroke="#c4c4c4" stroke-width="1"/><path d="M8 5l2 1.500l-2 1.500z" fill="#777"/><path d="M11.500 1v10" stroke="#101080" stroke-width="1" stroke-dasharray="1.500 1"/><path d="M11.500 2.500v10" stroke="#108080" stroke-width="1" stroke-dasharray="1 1.500"/></svg>
<svg class="a" style="left:1406px;top:371px" width="10" height="7" viewBox="0 0 10 7"><path d="M1.500 1.500L5 5L8.500 1.500" stroke="#4f4f4f" stroke-width="2" fill="none"/></svg>
<svg class="a" style="left:1383px;top:394px" width="12" height="12" viewBox="0 0 12 12"><rect x="0.500" y="0.500" width="11" height="11" fill="#fff" stroke="#808080"/><rect x="1" y="1" width="2.700" height="10" fill="#cfcfcf"/><path d="M1.800 3.500h1M1.800 6.500h1M1.800 9.500h1" stroke="#8a8a8a" stroke-width="1"/><path d="M5 3.500h4M5 6.500h2M5 9.500h3" stroke="#c4c4c4" stroke-width="1"/><path d="M8 5l2 1.500l-2 1.500z" fill="#777"/><path d="M11.500 1v10" stroke="#101080" stroke-width="1" stroke-dasharray="1.500 1"/><path d="M11.500 2.500v10" stroke="#108080" stroke-width="1" stroke-dasharray="1 1.500"/></svg>
<svg class="a" style="left:1406px;top:397px" width="10" height="7" viewBox="0 0 10 7"><path d="M1.500 1.500L5 5L8.500 1.500" stroke="#4f4f4f" stroke-width="2" fill="none"/></svg>
<div class="a" style="left:9px;top:921px;width:1414px;height:29px;background:linear-gradient(#dde6f0,#e4ebf4);"></div>
<svg class="a" style="left:24px;top:929.5px" width="14" height="14" viewBox="0 0 14 14"><rect x="0.500" y="0.500" width="2" height="12" fill="#1e78e8"/><path d="M12.500 0.500v12L3.500 6.500z" fill="#1e78e8"/></svg>
<svg class="a" style="left:51px;top:929.5px" width="13" height="14" viewBox="0 0 13 14"><path d="M12 0.500v12.500L0.800 6.800z" fill="#1e78e8"/></svg>
<svg class="a" style="left:77px;top:929.5px" width="13" height="14" viewBox="0 0 13 14"><g fill="#9cbde8"><rect x="0" y="0.500" width="3" height="1.500"/><rect x="4" y="0.500" width="3.500" height="1.500"/><rect x="8.500" y="0.500" width="3.500" height="1.500"/><rect x="0" y="3.500" width="3" height="2"/><rect x="4" y="3.500" width="3.500" height="2"/><rect x="8.500" y="3.500" width="3.500" height="2"/><rect x="0" y="7" width="3" height="2"/><rect x="4" y="7" width="3.500" height="2"/><rect x="8.500" y="7" width="3.500" height="2"/><rect x="0" y="10.500" width="3" height="2"/><rect x="4" y="10.500" width="3.500" height="2"/><rect x="8.500" y="10.500" width="3.500" height="2"/></g></svg>
<svg class="a" style="left:103px;top:929.5px" width="13" height="14" viewBox="0 0 13 14"><path d="M0.800 0.500v12.500L12 6.800z" fill="#1e78e8"/></svg>
<svg class="a" style="left:127px;top:929.5px" width="14" height="14" viewBox="0 0 14 14"><path d="M0.500 0.500v12.500L9.500 6.800z" fill="#1e78e8"/><rect x="10.500" y="0.500" width="2" height="12" fill="#1e78e8"/></svg>
<div class="a" style="left:150px;top:925px;width:1px;height:23px;background:linear-gradient(#dfe7f0,#1f3f70 30%,#1f3f70 70%,#dfe7f0);"></div>
<div class="a" style="left:151px;top:925px;width:1px;height:23px;background:linear-gradient(#e4ebf4,#f8fafc 50%,#e4ebf4);"></div>
<div class="a" style="left:186px;top:925px;width:1px;height:23px;background:linear-gradient(#dfe7f0,#1f3f70 30%,#1f3f70 70%,#dfe7f0);"></div>
<div class="a" style="left:187px;top:925px;width:1px;height:23px;background:linear-gradient(#e4ebf4,#f8fafc 50%,#e4ebf4);"></div>
<div class="a" style="left:248px;top:925px;width:1px;height:23px;background:linear-gradient(#dfe7f0,#1f3f70 30%,#1f3f70 70%,#dfe7f0);"></div>
<div class="a" style="left:249px;top:925px;width:1px;height:23px;background:linear-gradient(#e4ebf4,#f8fafc 50%,#e4ebf4);"></div>
<div class="a" style="left:284px;top:925px;width:1px;height:23px;background:linear-gradient(#dfe7f0,#1f3f70 30%,#1f3f70 70%,#dfe7f0);"></div>
<div class="a" style="left:285px;top:925px;width:1px;height:23px;background:linear-gradient(#e4ebf4,#f8fafc 50%,#e4ebf4);"></div>
<div class="a" style="left:157px;top:924px;width:24px;height:24px;background:linear-gradient(#fde59a,#fbd568 50%,#fde595);border:1px solid #d9a63a;border-radius:2px;"></div>
<svg class="a" style="left:155px;top:922px" width="30" height="28" viewBox="155 922 30 28"><polygon points="165.09,942.41 177.38,930.63 175.02,928.17 162.74,939.96" fill="#f2cf6a" stroke="#6a5530" stroke-width="0.6" stroke-linejoin="round"/><polygon points="163.74,941.00 172.77,932.34 171.94,931.48 162.92,940.14" fill="#fbe9a6"/><polygon points="164.33,941.62 173.36,932.95 174.00,933.63 164.98,942.29" fill="#d9ad45"/><polygon points="174.12,933.75 174.86,933.04 172.51,930.59 171.77,931.30" fill="#3f8f4f"/><polygon points="174.86,933.04 175.90,932.05 173.54,929.59 172.51,930.59" fill="#e4e4e4"/><polygon points="175.90,932.05 177.38,930.63 175.02,928.17 173.54,929.59" fill="#d9534f" stroke="#6a5530" stroke-width="0.6" stroke-linejoin="round"/><polygon points="161.40,943.60 165.09,942.41 162.74,939.96" fill="#f1cfa4" stroke="#6a5530" stroke-width="0.6" stroke-linejoin="round"/><polygon points="161.40,943.60 162.62,943.21 161.84,942.40" fill="#3a3a3a"/></svg>
<div class="a" style="left:193px;top:924px;width:24px;height:24px;background:linear-gradient(#fde59a,#fbd568 50%,#fde595);border:1px solid #d9a63a;border-radius:2px;"></div>
<svg class="a" style="left:197px;top:928px" width="17" height="16" viewBox="0 0 17 16"><rect x="0.500" y="2.500" width="15" height="11.500" fill="#fdfdfe" stroke="#4d5f86" stroke-width=".9"/><path d="M9 3.700h1.500M11.300 3.700h1.500M13.600 3.700h1.500" stroke="#4d5f86" stroke-width="1"/><path d="M2.500 6.500h3.500M2.500 10.500h3.500" stroke="#5a6a8a" stroke-width=".9"/><rect x="7.500" y="5.200" width="6" height="2.600" fill="#fff" stroke="#7f8aa6" stroke-width=".7"/><rect x="7.500" y="9.200" width="6" height="2.600" fill="#fff" stroke="#7f8aa6" stroke-width=".7"/></svg>
<svg class="a" style="left:223px;top:930px" width="17" height="14" viewBox="0 0 17 14"><rect x="0.500" y="0.500" width="15.500" height="12" fill="#d5e0f2" stroke="#9fb0d0" stroke-width=".8"/><path d="M0.500 3.500h15.500M0.500 6.500h15.500M0.500 9.500h15.500" stroke="#fff" stroke-width="1"/><path d="M4.500 0.500v12M8.500 0.500v12M12.500 0.500v12" stroke="#eef3fb" stroke-width=".8"/><path d="M1 13.200h15.500" stroke="#8fa3cc" stroke-width=".8"/></svg>
<svg class="a" style="left:259px;top:926px" width="16" height="19" viewBox="0 0 16 19"><path d="M1.700 4.500h8.300l3.300 3.300v9.500h-11.600z" fill="#fbfbfb" stroke="#9a9a9a" stroke-width=".9"/><path d="M2 17.800h11.500" stroke="#b5b5b5"/><path d="M3.500 9v-5.500a1.800 1.800 0 0 1 3.600 0v6.300a1 1 0 0 1 -2 0v-4.800" stroke="#4a4a4a" fill="none" stroke-width=".9"/></svg>
<div class="a" style="left:1180px;top:925px;width:1px;height:23px;background:linear-gradient(#dfe7f0,#1f3f70 30%,#1f3f70 70%,#dfe7f0);"></div>
<div class="a" style="left:1181px;top:925px;width:1px;height:23px;background:linear-gradient(#e4ebf4,#f8fafc 50%,#e4ebf4);"></div>
<div class="a" style="left:1249px;top:925px;width:1px;height:23px;background:linear-gradient(#dfe7f0,#1f3f70 30%,#1f3f70 70%,#dfe7f0);"></div>
<div class="a" style="left:1250px;top:925px;width:1px;height:23px;background:linear-gradient(#e4ebf4,#f8fafc 50%,#e4ebf4);"></div>
<div class="a" style="left:1284px;top:925px;width:1px;height:23px;background:linear-gradient(#dfe7f0,#1f3f70 30%,#1f3f70 70%,#dfe7f0);"></div>
<div class="a" style="left:1285px;top:925px;width:1px;height:23px;background:linear-gradient(#e4ebf4,#f8fafc 50%,#e4ebf4);"></div>
<svg class="a" style="left:1190.5px;top:927.5px" width="17" height="17" viewBox="0 0 17 17"><path d="M8 1.500c-3.500 0-5 3-5 6.500c0 3-1 4-2.500 5.500h15c-1.500-1.500-2.500-2.500-2.500-5.500c0-3.500-1.500-6.500-5-6.500z" fill="#f5b11a" stroke="#c9860a" stroke-width=".7"/><path d="M5 4c1-1.500 2.500-2 4-1.500" stroke="#ffe28a" stroke-width="1.400" fill="none"/><circle cx="8" cy="15" r="1.700" fill="#d9920f"/></svg>
<div class="a" style="left:1332px;top:924px;width:74px;height:24px;background:#e1e1e1;border:1px solid #707070;"></div>
<div class="a" style="left:1420px;top:938px;width:2px;height:2px;background:#a5b0c0;"></div>
<div class="a" style="left:1420px;top:941px;width:2px;height:2px;background:#a5b0c0;"></div>
<div class="a" style="left:1420px;top:944px;width:2px;height:2px;background:#a5b0c0;"></div>
<div class="a" style="left:1420px;top:947px;width:2px;height:2px;background:#a5b0c0;"></div>
<div class="a" style="left:1417px;top:941px;width:2px;height:2px;background:#a5b0c0;"></div>
<div class="a" style="left:1417px;top:944px;width:2px;height:2px;background:#a5b0c0;"></div>
<div class="a" style="left:1417px;top:947px;width:2px;height:2px;background:#a5b0c0;"></div>
<div class="a" style="left:1414px;top:944px;width:2px;height:2px;background:#a5b0c0;"></div>
<div class="a" style="left:1414px;top:947px;width:2px;height:2px;background:#a5b0c0;"></div>
<div class="a" style="left:1411px;top:947px;width:2px;height:2px;background:#a5b0c0;"></div>
<span class="t" id="t0" style="left:419.70px;top:9.00px;font-size:14.5px;line-height:18px;color:#1a1a1a;letter-spacing:-0.509px;">Released</span>
<span class="t" id="t1" style="left:483.40px;top:9.00px;font-size:14.5px;line-height:18px;color:#1a1a1a;letter-spacing:0.087px;">product</span>
<span class="t" id="t2" style="left:539.50px;top:9.00px;font-size:14.5px;line-height:18px;color:#1a1a1a;letter-spacing:0.113px;">details</span>
<span class="t" id="t3" style="left:587.90px;top:9.00px;font-size:14.5px;line-height:18px;color:#1a1a1a;letter-spacing:-1.706px;">(1</span>
<span class="t" id="t4" style="left:605.90px;top:9.00px;font-size:14.5px;line-height:18px;color:#1a1a1a;">-</span>
<span class="t" id="t5" style="left:614.80px;top:9.00px;font-size:14.5px;line-height:18px;color:#1a1a1a;letter-spacing:-0.262px;">usmf)</span>
<span class="t" id="t6" style="left:656.80px;top:9.00px;font-size:14.5px;line-height:18px;color:#1a1a1a;">-</span>
<span class="t" id="t7" style="left:665.80px;top:9.00px;font-size:14.5px;line-height:18px;color:#1a1a1a;letter-spacing:0.003px;">Product</span>
<span class="t" id="t8" style="left:720.60px;top:9.00px;font-size:14.5px;line-height:18px;color:#1a1a1a;letter-spacing:0.033px;">number:</span>
<span class="t" id="t9" style="left:778.50px;top:9.00px;font-size:14.5px;line-height:18px;color:#1a1a1a;letter-spacing:-0.980px;">PACK01,</span>
<span class="t" id="t10" style="left:837.30px;top:9.00px;font-size:14.5px;line-height:18px;color:#1a1a1a;letter-spacing:-0.880px;">PACK01,</span>
<span class="t" id="t11" style="left:896.20px;top:9.00px;font-size:14.5px;line-height:18px;color:#1a1a1a;letter-spacing:-0.219px;">Products:</span>
<span class="t" id="t12" style="left:960.10px;top:9.00px;font-size:14.5px;line-height:18px;color:#1a1a1a;letter-spacing:-0.809px;">PACK01</span>
<span class="t" id="t13" style="left:24.40px;top:38.00px;font-size:12px;line-height:16px;color:#fff;letter-spacing:-0.615px;">File</span>
<span class="t" id="t14" style="left:93.00px;top:38.00px;font-size:12px;line-height:16px;color:#1b2054;letter-spacing:0.107px;">Product</span>
<span class="t" id="t15" style="left:164.00px;top:38.00px;font-size:12px;line-height:16px;color:#1b2054;letter-spacing:-0.386px;">Purchase</span>
<span class="t" id="t16" style="left:241.00px;top:38.00px;font-size:12px;line-height:16px;color:#1b2054;letter-spacing:-0.672px;">Sell</span>
<span class="t" id="t17" style="left:288.00px;top:38.00px;font-size:12px;line-height:16px;color:#1b2054;letter-spacing:0.041px;">Manage inventory</span>
<span class="t" id="t18" style="left:413.00px;top:38.00px;font-size:12px;line-height:16px;color:#1b2054;letter-spacing:-0.292px;">Engineer</span>
<span class="t" id="t19" style="left:488.00px;top:38.00px;font-size:12px;line-height:16px;color:#1b2054;letter-spacing:-0.344px;">Plan</span>
<span class="t" id="t20" style="left:540.00px;top:38.00px;font-size:12px;line-height:16px;color:#1b2054;letter-spacing:-0.051px;">Manage projects</span>
<span class="t" id="t21" style="left:657.00px;top:38.00px;font-size:12px;line-height:16px;color:#1b2054;letter-spacing:-0.156px;">Manage costs</span>
<span class="t" id="t22" style="left:759.00px;top:38.00px;font-size:12px;line-height:16px;color:#1b2054;letter-spacing:-0.338px;">Retail</span>
<span class="t" id="t23" style="left:817.00px;top:38.00px;font-size:12px;line-height:16px;color:#1b2054;letter-spacing:-0.451px;">General</span>
<span class="t" id="t24" style="left:886.00px;top:38.00px;font-size:12px;line-height:16px;color:#1b2054;letter-spacing:-0.340px;">Setup</span>
<span class="t" id="t25" style="left:1401.33px;top:37.50px;font-size:12px;line-height:16px;font-weight:bold;color:#fff;">?</span>
<span class="t" id="t26" style="left:25.90px;top:98.00px;font-size:12px;line-height:16px;color:#1b2054;letter-spacing:-0.562px;">Edit</span>
<span class="t" id="t27" style="left:78.80px;top:63.00px;font-size:12px;line-height:16px;color:#1b2054;letter-spacing:-0.537px;">Delete</span>
<span class="t" id="t28" style="left:78.00px;top:85.00px;font-size:12px;line-height:16px;color:#1b2054;letter-spacing:0.124px;">Apply template</span>
<span class="t" id="t29" style="left:78.00px;top:107.00px;font-size:12px;line-height:16px;color:#1b2054;letter-spacing:-0.069px;">Validate</span>
<span class="t" id="t30" style="left:64.00px;top:131.00px;font-size:12px;line-height:16px;color:#1b2054;letter-spacing:0.234px;">Maintain</span>
<span class="t" id="t31" style="left:215.00px;top:131.00px;font-size:12px;line-height:16px;color:#1b2054;letter-spacing:-0.008px;">New</span>
<span class="t" id="t32" style="left:336.50px;top:131.00px;font-size:12px;line-height:16px;color:#1b2054;letter-spacing:-0.029px;">Product master</span>
<span class="t" id="t33" style="left:477.75px;top:131.00px;font-size:12px;line-height:16px;color:#1b2054;letter-spacing:-0.236px;">Languages</span>
<span class="t" id="t34" style="left:724.50px;top:131.00px;font-size:12px;line-height:16px;color:#1b2054;letter-spacing:-0.341px;">Set up</span>
<span class="t" id="t35" style="left:942.00px;top:131.00px;font-size:12px;line-height:16px;color:#1b2054;letter-spacing:0.130px;">Product kit</span>
<span class="t" id="t36" style="left:1017.00px;top:131.00px;font-size:12px;line-height:16px;color:#1b2054;letter-spacing:0.130px;">Attachments</span>
<span class="t" id="t37" style="left:176.00px;top:98.00px;font-size:12px;line-height:16px;color:#1b2054;letter-spacing:0.107px;">Product</span>
<span class="t" id="t38" style="left:229.00px;top:98.00px;font-size:12px;line-height:16px;color:#1b2054;letter-spacing:0.185px;">Template</span>
<span class="t" id="t39" style="left:296.00px;top:98.00px;font-size:12px;line-height:16px;color:#a6a6a6;letter-spacing:-0.204px;">Released product</span>
<span class="t" id="t40" style="left:321.00px;top:113.00px;font-size:12px;line-height:16px;color:#a6a6a6;letter-spacing:-0.147px;">variants</span>
<span class="t" id="t41" style="left:405.00px;top:98.00px;font-size:12px;line-height:16px;color:#a6a6a6;letter-spacing:0.107px;">Product</span>
<span class="t" id="t42" style="left:395.50px;top:113.00px;font-size:12px;line-height:16px;color:#a6a6a6;letter-spacing:0.033px;">dimensions</span>
<span class="t" id="t43" style="left:475.00px;top:98.00px;font-size:12px;line-height:16px;color:#1b2054;letter-spacing:-0.084px;">Translations</span>
<span class="t" id="t44" style="left:558.00px;top:98.00px;font-size:12px;line-height:16px;color:#1b2054;letter-spacing:0.037px;">Dimension</span>
<span class="t" id="t45" style="left:564.00px;top:113.00px;font-size:12px;line-height:16px;color:#1b2054;letter-spacing:0.059px;">groups</span>
<span class="t" id="t46" style="left:626.00px;top:98.00px;font-size:12px;line-height:16px;color:#a6a6a6;letter-spacing:-0.303px;">Reservation</span>
<span class="t" id="t47" style="left:628.00px;top:113.00px;font-size:12px;line-height:16px;color:#a6a6a6;letter-spacing:-0.045px;">hierarchy</span>
<span class="t" id="t48" style="left:702.00px;top:98.00px;font-size:12px;line-height:16px;color:#1b2054;letter-spacing:0.107px;">Product</span>
<span class="t" id="t49" style="left:698.00px;top:113.00px;font-size:12px;line-height:16px;color:#1b2054;letter-spacing:0.071px;">attributes</span>
<span class="t" id="t50" style="left:759.00px;top:98.00px;font-size:12px;line-height:16px;color:#1b2054;letter-spacing:0.107px;">Product</span>
<span class="t" id="t51" style="left:763.50px;top:113.00px;font-size:12px;line-height:16px;color:#1b2054;letter-spacing:0.078px;">image</span>
<span class="t" id="t52" style="left:829.00px;top:63.00px;font-size:12px;line-height:16px;color:#1b2054;letter-spacing:-0.062px;">Product categories</span>
<span class="t" id="t53" style="left:829.00px;top:85.00px;font-size:12px;line-height:16px;color:#1b2054;letter-spacing:-0.116px;">Related products</span>
<span class="t" id="t54" style="left:829.00px;top:107.00px;font-size:12px;line-height:16px;color:#1b2054;letter-spacing:-0.048px;">Unit conversions</span>
<span class="t" id="t55" style="left:945.00px;top:98.00px;font-size:12px;line-height:16px;color:#a6a6a6;letter-spacing:0.121px;">Configure</span>
<span class="t" id="t56" style="left:1017.00px;top:98.00px;font-size:12px;line-height:16px;color:#1b2054;letter-spacing:0.130px;">Attachments</span>
<span class="t" id="t57" style="left:491.50px;top:65.60px;font-size:17.5px;line-height:22px;color:#2d2d2d;">a</span>
<span class="t" id="t58" style="left:503.00px;top:71.40px;font-size:19.5px;line-height:24px;color:#1c1c1c;font-family:"Liberation Sans","Noto Sans CJK JP",sans-serif;">あ</span>
<span class="t" id="t59" style="left:17.60px;top:158.00px;font-size:15px;line-height:19px;color:#2a9a2a;letter-spacing:-0.882px;">PACK01 : PACK01</span>
<span class="t" id="t60" style="left:14.80px;top:181.00px;font-size:12px;line-height:16px;color:#555;letter-spacing:-0.127px;">Product type:</span>
<span class="t" id="t61" style="left:94.80px;top:182.00px;font-size:12px;line-height:16px;letter-spacing:-0.215px;">Item</span>
<span class="t" id="t62" style="left:157.70px;top:181.00px;font-size:12px;line-height:16px;color:#555;letter-spacing:-0.098px;">Product subtype:</span>
<span class="t" id="t63" style="left:256.40px;top:182.00px;font-size:12px;line-height:16px;letter-spacing:0.007px;">Product</span>
<span class="t" id="t64" style="left:33.00px;top:211.00px;font-size:13px;line-height:17px;font-weight:bold;color:#1e1e1e;letter-spacing:-0.039px;">Promote</span>
<span class="t" id="t65" style="left:33.00px;top:235.00px;font-size:13px;line-height:17px;font-weight:bold;color:#1e1e1e;letter-spacing:0.104px;">Deliver</span>
<span class="t" id="t66" style="left:33.00px;top:259.00px;font-size:13px;line-height:17px;font-weight:bold;color:#1e1e1e;letter-spacing:-0.542px;">Sell</span>
<span class="t" id="t67" style="left:33.00px;top:283.00px;font-size:13px;line-height:17px;font-weight:bold;color:#1e1e1e;letter-spacing:-0.007px;">Foreign trade</span>
<span class="t" id="t68" style="left:33.00px;top:307.00px;font-size:13px;line-height:17px;font-weight:bold;color:#1e1e1e;letter-spacing:0.165px;">Manage inventory</span>
<span class="t" id="t69" style="left:33.00px;top:756.00px;font-size:13px;line-height:17px;font-weight:bold;color:#1e1e1e;letter-spacing:-0.323px;">Plan</span>
<span class="t" id="t70" style="left:33.00px;top:780.00px;font-size:13px;line-height:17px;font-weight:bold;color:#1e1e1e;letter-spacing:-0.180px;">Manage costs</span>
<span class="t" id="t71" style="left:33.00px;top:804.00px;font-size:13px;line-height:17px;font-weight:bold;color:#1e1e1e;letter-spacing:-0.078px;">Manage projects</span>
<span class="t" id="t72" style="left:33.00px;top:828.00px;font-size:13px;line-height:17px;font-weight:bold;color:#1e1e1e;letter-spacing:-0.116px;">Financial dimensions</span>
<span class="t" id="t73" style="left:33.00px;top:852.00px;font-size:13px;line-height:17px;font-weight:bold;color:#1e1e1e;letter-spacing:-0.021px;">Warehouse management</span>
<span class="t" id="t74" style="left:33.00px;top:876.00px;font-size:13px;line-height:17px;font-weight:bold;color:#1e1e1e;letter-spacing:-0.181px;">Retail</span>
<span class="t" id="t75" style="left:33.00px;top:900.00px;font-size:13px;line-height:17px;font-weight:bold;color:#1e1e1e;letter-spacing:0.049px;">Transportation management</span>
<span class="t" id="t76" style="left:33.00px;top:331.00px;font-size:13px;line-height:17px;font-weight:bold;color:#1e1e1e;letter-spacing:-0.161px;">Engineer</span>
<span class="t" id="t77" style="left:1101.00px;top:261.00px;font-size:12px;line-height:16px;color:#2a5fd0;letter-spacing:-0.180px;">box</span>
<span class="t" id="t78" style="left:1161.00px;top:261.00px;font-size:12px;line-height:16px;color:#222;letter-spacing:-0.786px;">0.00</span>
<span class="t" id="t79" style="left:1163.00px;top:309.00px;font-size:12px;line-height:16px;color:#2a5fd0;letter-spacing:-0.180px;">box</span>
<span class="t" id="t80" style="left:1163.00px;top:333.00px;font-size:12px;line-height:16px;color:#2a5fd0;letter-spacing:-0.180px;">box</span>
<span class="t" id="t81" style="left:1161.00px;top:782.00px;font-size:12px;line-height:16px;color:#222;letter-spacing:-0.786px;">0.00</span>
<span class="t" id="t82" style="left:33.00px;top:352.00px;font-size:12px;line-height:16px;font-weight:bold;letter-spacing:-0.211px;">Bill of materials</span>
<span class="t" id="t83" style="left:33.00px;top:376.00px;font-size:12px;line-height:16px;color:#4d4d4d;letter-spacing:0.018px;">BOM unit:</span>
<span class="t" id="t84" style="left:212.00px;top:376.00px;font-size:12px;line-height:16px;letter-spacing:-0.180px;">box</span>
<span class="t" id="t85" style="left:33.00px;top:402.00px;font-size:12px;line-height:16px;color:#4d4d4d;letter-spacing:-0.146px;">Constant scrap:</span>
<span class="t" id="t86" style="left:33.00px;top:428.00px;font-size:12px;line-height:16px;color:#4d4d4d;letter-spacing:-0.261px;">Variable scrap:</span>
<span class="t" id="t87" style="left:33.00px;top:454.00px;font-size:12px;line-height:16px;color:#4d4d4d;letter-spacing:-0.506px;">Level:</span>
<span class="t" id="t88" style="left:225.31px;top:454.00px;font-size:12px;line-height:16px;">0</span>
<span class="t" id="t89" style="left:33.00px;top:481.00px;font-size:12px;line-height:16px;color:#4d4d4d;letter-spacing:0.018px;">Phantom:</span>
<span class="t" id="t90" style="left:33.00px;top:506.00px;font-size:12px;line-height:16px;color:#4d4d4d;letter-spacing:0.018px;">Auto-report as finished:</span>
<span class="t" id="t91" style="left:33.00px;top:540.00px;font-size:12px;line-height:16px;font-weight:bold;letter-spacing:0.062px;">Measurement</span>
<span class="t" id="t92" style="left:33.00px;top:564.00px;font-size:12px;line-height:16px;color:#4d4d4d;letter-spacing:0.078px;">Height:</span>
<span class="t" id="t93" style="left:33.00px;top:590.00px;font-size:12px;line-height:16px;color:#4d4d4d;letter-spacing:0.097px;">Width:</span>
<span class="t" id="t94" style="left:33.00px;top:616.00px;font-size:12px;line-height:16px;color:#4d4d4d;letter-spacing:-0.172px;">Depth:</span>
<span class="t" id="t95" style="left:33.00px;top:642.00px;font-size:12px;line-height:16px;color:#4d4d4d;letter-spacing:-0.266px;">Density:</span>
<span class="t" id="t96" style="left:33.00px;top:678.00px;font-size:12px;line-height:16px;font-weight:bold;letter-spacing:-0.469px;">Calculation</span>
<span class="t" id="t97" style="left:33.00px;top:702.00px;font-size:12px;line-height:16px;color:#4d4d4d;letter-spacing:0.016px;">Calculation group:</span>
<span class="t" id="t98" style="left:323.00px;top:352.00px;font-size:12px;line-height:16px;font-weight:bold;letter-spacing:-0.259px;">Production</span>
<span class="t" id="t99" style="left:323.00px;top:376.00px;font-size:12px;line-height:16px;color:#4d4d4d;letter-spacing:0.118px;">Production pool:</span>
<span class="t" id="t100" style="left:323.00px;top:402.00px;font-size:12px;line-height:16px;color:#4d4d4d;letter-spacing:0.142px;">Production group:</span>
<span class="t" id="t101" style="left:323.00px;top:428.00px;font-size:12px;line-height:16px;color:#4d4d4d;letter-spacing:-0.148px;">Property:</span>
<span class="t" id="t102" style="left:323.00px;top:455.00px;font-size:12px;line-height:16px;color:#4d4d4d;letter-spacing:-0.121px;">Arrival:</span>
<span class="t" id="t103" style="left:323.00px;top:479.00px;font-size:12px;line-height:16px;color:#4d4d4d;letter-spacing:-0.012px;">Flushing principle:</span>
<span class="t" id="t104" style="left:467.00px;top:481.00px;font-size:12px;line-height:16px;letter-spacing:-0.211px;">Start</span>
<span class="t" id="t105" style="left:323.00px;top:515.00px;font-size:12px;line-height:16px;font-weight:bold;letter-spacing:-0.215px;">Product Builder</span>
<span class="t" id="t106" style="left:323.00px;top:540.00px;font-size:12px;line-height:16px;color:#4d4d4d;letter-spacing:0.026px;">Modeling enabled:</span>
<span class="t" id="t107" style="left:323.00px;top:565.00px;font-size:12px;line-height:16px;color:#4d4d4d;letter-spacing:-0.004px;">Hide dialog box:</span>
<span class="t" id="t108" style="left:323.00px;top:590.00px;font-size:12px;line-height:16px;color:#4d4d4d;letter-spacing:-0.013px;">Hide approval dialog:</span>
<span class="t" id="t109" style="left:323.00px;top:615.00px;font-size:12px;line-height:16px;color:#4d4d4d;letter-spacing:0.156px;">Autostart configuration:</span>
<span class="t" id="t110" style="left:323.00px;top:640.00px;font-size:12px;line-height:16px;color:#4d4d4d;letter-spacing:0.171px;">Mandatory configuration:</span>
<span class="t" id="t111" style="left:323.00px;top:674.00px;font-size:12px;line-height:16px;font-weight:bold;letter-spacing:-0.411px;">Formula planning</span>
<span class="t" id="t112" style="left:323.00px;top:698.00px;font-size:12px;line-height:16px;color:#4d4d4d;letter-spacing:0.019px;">Production type:</span>
<span class="t" id="t113" style="left:468.00px;top:700.00px;font-size:12px;line-height:16px;color:#f4f070;letter-spacing:-0.236px;">Formula</span>
<span class="t" id="t114" style="left:323.00px;top:724.00px;font-size:12px;line-height:16px;color:#7a7a7a;letter-spacing:0.038px;">Planning formula:</span>
<span class="t" id="t115" style="left:1226.60px;top:157.00px;font-size:12px;line-height:16px;font-weight:bold;color:#5c5650;letter-spacing:-0.402px;">Retail channels</span>
<span class="t" id="t116" style="left:1231.50px;top:178.00px;font-size:12px;line-height:16px;letter-spacing:0.100px;">Operating unit number</span>
<span class="t" id="t117" style="left:1371.30px;top:178.00px;font-size:12px;line-height:16px;letter-spacing:-0.039px;">Name</span>
<span class="t" id="t118" style="left:1305.00px;top:211.00px;font-size:12px;line-height:16px;color:#222;letter-spacing:-0.594px;">#1387</span>
<span class="t" id="t119" style="left:1274.90px;top:226.00px;font-size:12px;line-height:16px;color:#222;">&gt;</span>
<span class="t" id="t120" style="left:1283.00px;top:226.00px;font-size:12px;line-height:16px;color:#222;letter-spacing:-1.476px;">MSG_PRESENCE</span>
<span class="t" id="t121" style="left:1382.50px;top:311.00px;font-size:12px;line-height:16px;color:#2560d4;letter-spacing:-0.172px;">l data</span>
<span class="t" id="t122" style="left:1226.60px;top:339.00px;font-size:12px;line-height:16px;font-weight:bold;color:#5c5650;letter-spacing:-0.161px;">Related product variants</span>
<span class="t" id="t123" style="left:1226.60px;top:365.00px;font-size:12px;line-height:16px;font-weight:bold;color:#5c5650;letter-spacing:-0.442px;">Product change cases</span>
<span class="t" id="t124" style="left:1226.60px;top:391.00px;font-size:12px;line-height:16px;font-weight:bold;color:#5c5650;letter-spacing:-0.336px;">Assortments</span>
<span class="t" id="t125" style="left:292.00px;top:929.00px;font-size:12px;line-height:16px;color:#222;letter-spacing:0.047px;">Define production type of an item.</span>
<span class="t" id="t126" style="left:1207.50px;top:929.00px;font-size:12px;line-height:16px;color:#333;letter-spacing:-0.577px;">(3697)</span>
<span class="t" id="t127" style="left:1256.40px;top:929.00px;font-size:12px;line-height:16px;color:#333;letter-spacing:-1.572px;">USD</span>
<span class="t" id="t128" style="left:1291.60px;top:929.00px;font-size:12px;line-height:16px;color:#333;letter-spacing:-0.272px;">usmf</span>
<span class="t" id="t129" style="left:1354.60px;top:929.00px;font-size:12px;line-height:16px;color:#111;letter-spacing:-0.472px;">Close</span>
</body></html>
